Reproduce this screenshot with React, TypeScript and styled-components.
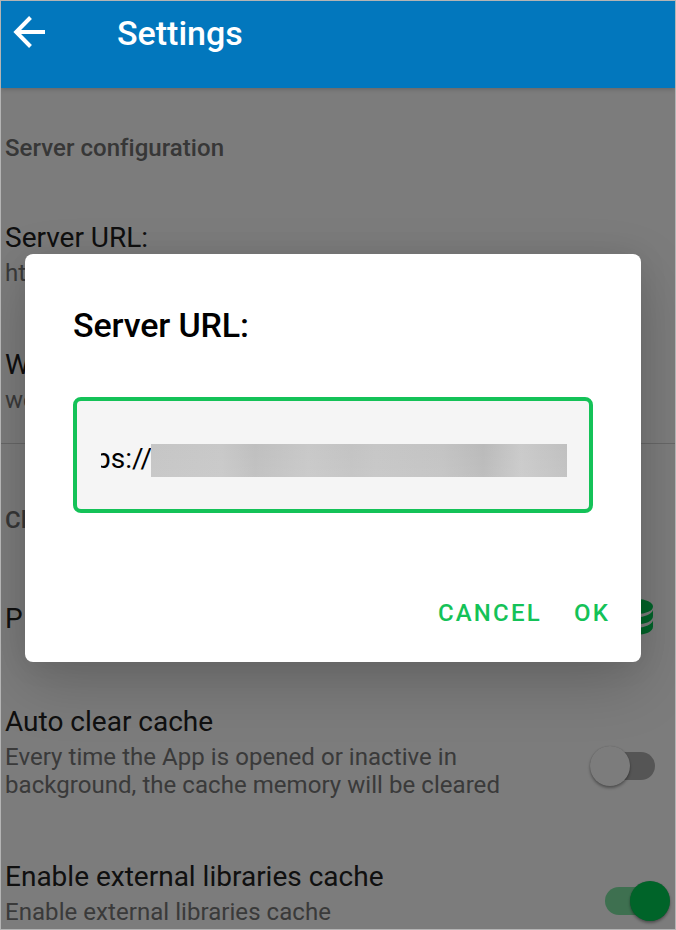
import React from 'react';
import styled, { createGlobalStyle } from 'styled-components';

const GlobalStyle = createGlobalStyle`
  * { box-sizing: border-box; }
  body { margin: 0; overflow: hidden; background: #f8f8f8; }
  button { border: 0; background: none; padding: 0; font: inherit; color: inherit; }
`;

const Screen = styled.div`
  position: relative;
  width: 676px;
  height: 930px;
  overflow: hidden;
  border: 1px solid #b4b4b4;
  background: #f8f8f8;
  font-family: Roboto, 'Liberation Sans', sans-serif;
  display: flex;
  flex-direction: column;
`;

const AppBar = styled.header`
  position: relative;
  z-index: 3;
  flex: none;
  height: 87px;
  background: #0277bd;
  box-shadow: 0 1px 5px rgba(0, 0, 0, 0.2);
  display: flex;
  align-items: flex-start;
  color: #fff;
`;

const BackButton = styled.button`
  margin: 14px 0 0 12px;
  width: 34px;
  height: 34px;
  svg { display: block; }
`;

const AppTitle = styled.h1`
  margin: 12px 0 0 70px;
  font-size: 34px;
  line-height: 40px;
  font-weight: 500;
`;

const Preferences = styled.main`
  flex: 1;
  min-height: 0;
  overflow: hidden;
`;

const Category = styled.h2<{ $top: number }>`
  margin: 0;
  padding: ${p => p.$top}px 4px 0;
  font-size: 24px;
  line-height: 28px;
  font-weight: 500;
  letter-spacing: 0.04px;
  color: #6e6e6e;
`;

const Item = styled.div<{ $height: number; $top?: number; $divider?: boolean }>`
  height: ${p => p.$height}px;
  padding: ${p => p.$top ?? 31}px 4px 0;
  display: flex;
  justify-content: space-between;
  border-bottom: ${p => (p.$divider ? '1px solid #cfcfcf' : '0')};
`;

const ItemTitle = styled.div`
  font-size: 28px;
  line-height: 34px;
  color: #212121;
`;

const Summary = styled.div`
  margin-top: 4px;
  width: 520px;
  font-size: 24px;
  line-height: 28px;
  letter-spacing: 0.05px;
  color: #747474;
`;

const Track = styled.div<{ $on?: boolean }>`
  flex: none;
  width: 50px;
  height: 28px;
  border-radius: 14px;
  background: ${p => (p.$on ? '#7ce1a1' : '#ababab')};
  margin: ${p => (p.$on ? '27px 16px 0 0' : '47px 16px 0 0')};
  display: flex;
  align-items: center;
  justify-content: ${p => (p.$on ? 'flex-end' : 'flex-start')};
`;

const Thumb = styled.div<{ $on?: boolean }>`
  flex: none;
  width: 40px;
  height: 40px;
  margin: 0 -15px;
  border-radius: 50%;
  background: ${p => (p.$on ? '#00c853' : '#f8f8f8')};
  box-shadow: 0 2px 3px rgba(0, 0, 0, 0.35), 0 0 1px rgba(0, 0, 0, 0.25);
`;

const DatabaseIcon = styled.svg`
  margin: -3px 18px 0 0;
  flex: none;
`;

const Scrim = styled.div`
  position: absolute;
  inset: 0;
  z-index: 2;
  background: rgba(0, 0, 0, 0.5);
`;

const Dialog = styled.section`
  position: absolute;
  z-index: 4;
  left: 24px;
  top: 253px;
  width: 616px;
  height: 408px;
  padding: 50px 48px 0;
  border-radius: 8px;
  background: #fff;
  box-shadow: 0 22px 60px rgba(0, 0, 0, 0.18), 0 2px 30px rgba(0, 0, 0, 0.08);
`;

const DialogTitle = styled.h2`
  margin: 0;
  font-size: 34px;
  line-height: 42px;
  font-weight: 500;
  letter-spacing: -0.15px;
  color: #000;
`;

const Field = styled.div`
  margin-top: 51px;
  height: 116px;
  padding: 8px 22px 0 24px;
  display: flex;
  align-items: center;
  border: 4px solid #14c258;
  border-radius: 8px;
  background: #f5f5f5;
`;

const FieldText = styled.div`
  width: 50px;
  overflow: hidden;
  display: flex;
  justify-content: flex-end;
  font-size: 28px;
  line-height: 36px;
  color: #000;

  span { margin-right: -1px; }
`;

const Redacted = styled.div`
  flex: 1;
  height: 33px;
  margin-top: 2px;
  background:
    linear-gradient(rgba(255, 255, 255, 0), rgba(255, 255, 255, 0.06)),
    linear-gradient(90deg, #c5c5c5 0%, #c8c8c8 17%, #bfbfbf 25%, #c8c8c8 38%,
      #c3c3c3 48%, #c6c6c6 54%, #c3c3c3 70%, #bababa 80%, #cacaca 89%, #c0c0c0 100%);
`;

const Actions = styled.div`
  display: flex;
  justify-content: flex-end;
  gap: 32px;
  margin: 86px -17px 0 0;
`;

const ActionButton = styled.button`
  font-size: 24px;
  line-height: 28px;
  font-weight: 500;
  letter-spacing: 2.2px;
  color: #14c258;
`;

function Toggle({ on }: { on?: boolean }) {
  return (
    <Track $on={on} role="switch" aria-checked={!!on}>
      <Thumb $on={on} />
    </Track>
  );
}

export default function App() {
  return (
    <>
      <GlobalStyle />
      <Screen>
        <AppBar>
          <BackButton aria-label="Back">
            <svg width="34" height="34" viewBox="0 0 34 34" fill="none" stroke="#fff" strokeWidth="4">
              <path d="M32 17H4M17.5 2.5L3.2 17L17.5 31.5" />
            </svg>
          </BackButton>
          <AppTitle>Settings</AppTitle>
        </AppBar>
        <Preferences>
          <Category $top={46}>Server configuration</Category>
          <Item $height={155} $top={59}>
            <div>
              <ItemTitle>Server URL:</ItemTitle>
              <Summary>https://</Summary>
            </div>
          </Item>
          <Item $height={127} $divider>
            <div>
              <ItemTitle>W</ItemTitle>
              <Summary>we</Summary>
            </div>
          </Item>
          <Category $top={62}>Cl</Category>
          <Item $height={140} $top={68}>
            <ItemTitle>P</ItemTitle>
            <DatabaseIcon width="32" height="36" viewBox="0 0 32 36" fill="#00c853">
              <ellipse cx="16" cy="7.5" rx="16" ry="7.5" />
              <path d="M0 11C3 20.5 29 20.5 32 11V17C32 28 0 28 0 17Z" />
              <path d="M0 21.5C3 31 29 31 32 21.5V27.5C32 38.5 0 38.5 0 27.5Z" />
            </DatabaseIcon>
          </Item>
          <Item $height={155}>
            <div>
              <ItemTitle>Auto clear cache</ItemTitle>
              <Summary>Every time the App is opened or inactive in background, the cache memory will be cleared</Summary>
            </div>
            <Toggle />
          </Item>
          <Item $height={110}>
            <div>
              <ItemTitle>Enable external libraries cache</ItemTitle>
              <Summary>Enable external libraries cache</Summary>
            </div>
            <Toggle on />
          </Item>
        </Preferences>
        <Scrim />
        <Dialog role="dialog" aria-label="Server URL">
          <DialogTitle>Server URL:</DialogTitle>
          <Field>
            <FieldText><span>https://</span></FieldText>
            <Redacted />
          </Field>
          <Actions>
            <ActionButton>CANCEL</ActionButton>
            <ActionButton>OK</ActionButton>
          </Actions>
        </Dialog>
      </Screen>
    </>
  );
}
